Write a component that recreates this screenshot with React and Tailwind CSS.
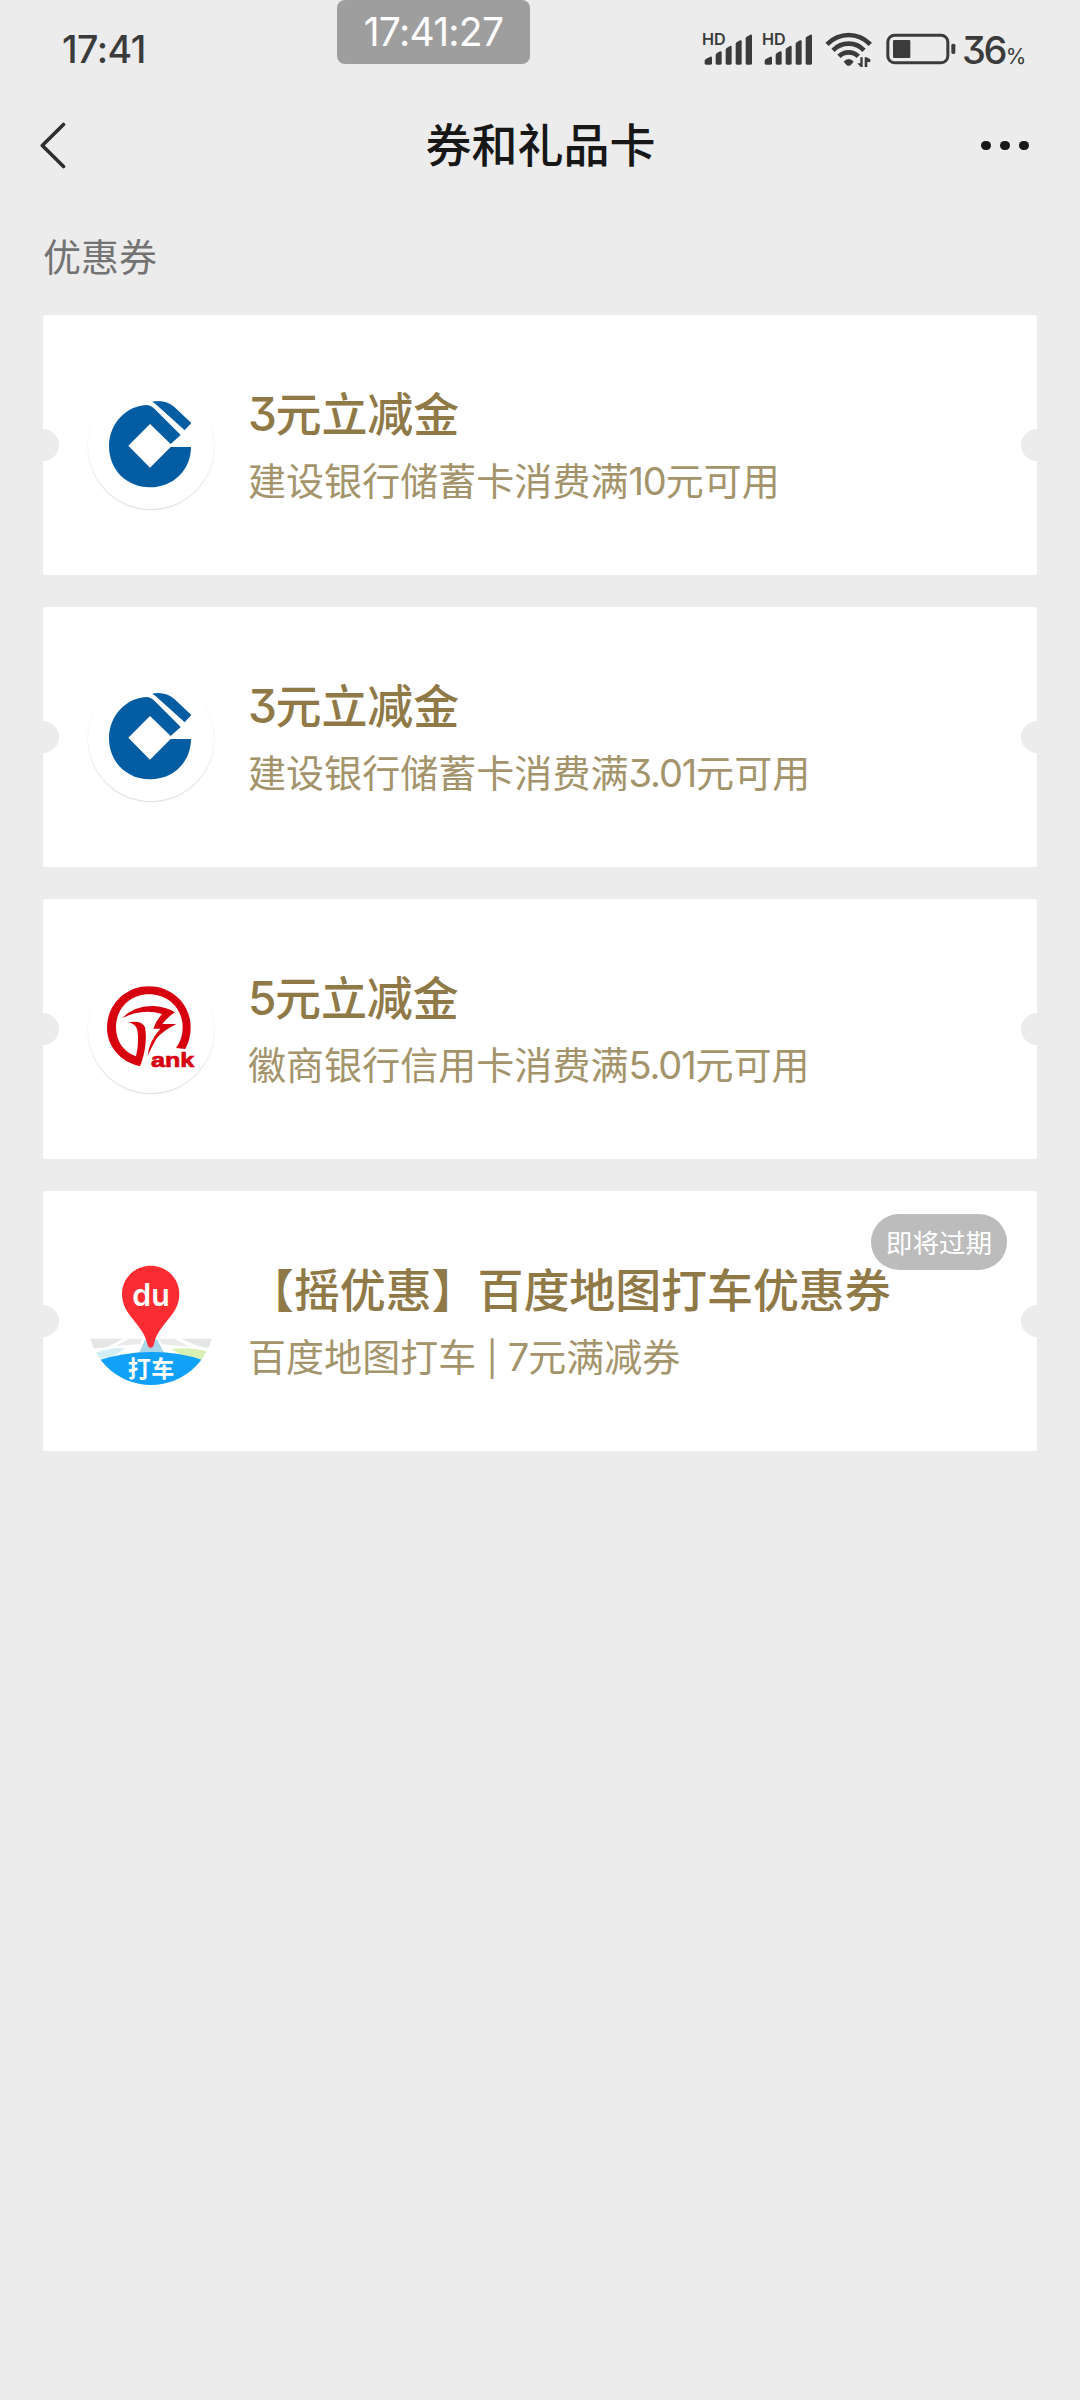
const CJK = "font-['Noto_Sans_CJK_SC',sans-serif]";
const NUM = "font-['Inter',sans-serif]";

function Signal() {
  return (
    <svg className="overflow-visible" width="53" height="38" viewBox="62 90 159 114" fill="#3b3b3b">
      <text x="65" y="135" fontSize="46" fontWeight="600" fontFamily="Inter, sans-serif" textLength="71" lengthAdjust="spacingAndGlyphs">HD</text>
      <path d="M73 190V182Q74 178 78 176L90 170Q95 169 95 174V190Q95 194 91 194H77Q73 194 73 190Z" />
      <path d="M106 190V165Q106 162 109 160L119 154Q124 152 124 157V190Q124 194 120 194H110Q106 194 106 190Z" />
      <path d="M136 190V149Q136 146 139 144L149 138Q154 136 154 141V190Q154 194 150 194H140Q136 194 136 190Z" />
      <path d="M166 190V132Q166 129 169 127L179 121Q184 119 184 124V190Q184 194 180 194H170Q166 194 166 190Z" />
      <path d="M196 190V115Q196 112 199 110L210 104Q215 102 215 107V190Q215 194 211 194H200Q196 194 196 190Z" />
    </svg>
  );
}

function Wifi() {
  return (
    <svg width="48" height="36" viewBox="433 96 144 108" fill="none">
      <g stroke="#3b3b3b" strokeWidth="14">
        <path d="M439 133Q467 105 504 105T569 133" />
        <path d="M457 151Q477 131 504 131T550 151" />
        <path d="M475 169Q487 157 504 157T533 169" />
      </g>
      <path d="M489 185Q495 177 504 177T519 185L511 194Q504 201 497 194Z" fill="#3b3b3b" />
      <path d="M539 172H546V201H540L530 190H539ZM552 201V172H558L569 178V186H560V201Z" fill="#3b3b3b" />
    </svg>
  );
}

function Battery() {
  return (
    <svg width="70" height="36" viewBox="617 96 210 108" fill="none">
      <rect x="622.5" y="106" width="180" height="82" rx="20" stroke="#3b3b3b" strokeWidth="9" />
      <rect x="638" y="120" width="52" height="54" rx="3" fill="#3b3b3b" />
      <rect x="813" y="131" width="12" height="31" rx="5" fill="#3b3b3b" />
    </svg>
  );
}

function StatusBar() {
  return (
    <div className="flex h-[98px] items-start text-[#3b3b3b]">
      <div className={`${NUM} ml-[62px] mt-[27px] w-[275px] text-[37.5px] leading-[46px] font-medium tracking-[-0.5px]`}>17:41</div>
      <div className={`${NUM} flex h-16 w-[193px] items-center justify-center rounded-lg bg-[#9e9e9e] text-[39px] tracking-[-0.7px] text-white`}>17:41:27</div>
      <div className="ml-[171px] mt-[30px] flex items-end">
        <Signal />
        <div className="ml-[7px]"><Signal /></div>
        <div className="ml-[11px]"><Wifi /></div>
        <div className="ml-[13px]"><Battery /></div>
      </div>
      <div className={`${NUM} mt-[27px] ml-[6px] flex items-baseline text-[38px] leading-[46px] font-medium [font-feature-settings:'cv09']`}>
        <span className="tracking-[-2.5px]">36</span>
        <span className="ml-px text-[21px] font-normal">%</span>
      </div>
    </div>
  );
}

function NavBar() {
  return (
    <div className="flex h-[96px] items-center justify-between pr-[51px] pl-[38px]">
      <svg width="36" height="48" viewBox="0 0 36 48" fill="none" stroke="#2e2e2e" strokeWidth="3.6" strokeLinecap="round" strokeLinejoin="round">
        <path d="M25.5 2.5L4.3 23.5L25.5 44.5" />
      </svg>
      <h1 className={`${CJK} mt-[-8px] ml-[26px] text-[46px] font-medium text-[#171717]`}>券和礼品卡</h1>
      <div className="flex gap-[9.5px] pb-[1px]">
        <i className="size-[9.7px] rounded-full bg-[#171717]" />
        <i className="size-[9.7px] rounded-full bg-[#171717]" />
        <i className="size-[9.7px] rounded-full bg-[#171717]" />
      </div>
    </div>
  );
}

function CcbLogo() {
  return (
    <svg width="126" height="126" viewBox="84 69 378 378" fill="#045da2">
      <path d="M276 125Q316 117 344 142L394 189L374 211L290 135Q284 129 276 125Z" />
      <path d="M362 225L332 252L270 192L205 257L270 323L332 261H393C393 330 340 382 270 382C198 382 147 328 147 259C147 190 200 136 262 135Q272 136 281 144Z" />
    </svg>
  );
}

function HuishangLogo() {
  return (
    <svg width="126" height="126" viewBox="84 51 378 378" fill="#d7000f">
      <path d="M240 349C180 335 141 288 141 234C141 163 198 109 266 109C337 109 392 163 392 232Q392 268 376 297L348 294Q368 268 368 232C368 174 323 133 267 133C210 133 168 176 168 232C168 277 194 307 228 319Q238 280 232 240Q228 222 204 217Q246 209 255 232C262 268 254 315 240 349Z" />
      <path d="M186 205Q222 166 282 168Q318 170 345 187Q322 202 307 222H349Q306 244 289 266Q276 289 263 317Q266 275 301 236H280Q288 212 306 192Q246 174 186 205Z" />
      <text x="273" y="352" fontSize="59" fontWeight="900" fontFamily="Liberation Sans, Arial, sans-serif" textLength="130" lengthAdjust="spacingAndGlyphs" stroke="#d7000f" strokeWidth="2">ank</text>
    </svg>
  );
}

function BaiduLogo() {
  return (
    <svg width="126" height="126" viewBox="84 87 378 378">
      <path d="M88 326H190L142 351L97 356Z" fill="#e4e5e5" />
      <path d="M208 326H247L240 342L166 348Z" fill="#e9eaea" />
      <path d="M297 326H343L389 350L305 343Z" fill="#e9eaea" />
      <path d="M363 326H456L450 355L414 348Z" fill="#e4e5e5" />
      <path d="M104 369Q150 352 196 354L168 374L118 388Z" fill="#d3eef5" />
      <path d="M334 357Q390 350 440 364L427 391L370 378Z" fill="#d9f0b4" />
      <path d="M256 328H291L314 372H236Z" fill="#a9d5e9" />
      <path d="M119 390Q190 367 273 366T427 390C393 440 335 467 273 467S153 440 119 390Z" fill="#12a1f8" />
      <path d="M272 107C224 107 186 145 186 192C186 257 250 282 262 342Q264 353 272 353T282 342C294 282 358 257 358 192C358 145 320 107 272 107Z" fill="#fb2d32" />
      <text x="217" y="229" fontSize="93" fontWeight="600" fontFamily="Inter, sans-serif" fill="#fff" textLength="112" lengthAdjust="spacingAndGlyphs">du</text>
      <text x="203" y="442" fontSize="69" fontWeight="700" fontFamily="Noto Sans CJK SC, sans-serif" fill="#fff" textLength="140" lengthAdjust="spacing">打车</text>
    </svg>
  );
}

const coupons = [
  { logo: CcbLogo, title: "3元立减金", note: "建设银行储蓄卡消费满10元可用" },
  { logo: CcbLogo, title: "3元立减金", note: "建设银行储蓄卡消费满3.01元可用" },
  { logo: HuishangLogo, title: "5元立减金", note: "徽商银行信用卡消费满5.01元可用" },
  { logo: BaiduLogo, title: "【摇优惠】百度地图打车优惠券", note: "百度地图打车 | 7元满减券", badge: "即将过期", flat: true },
];

/* Sets the digits of a line in the numeral face and trims the height of a divider bar. */
function Mixed({ text }) {
  return text.split(/([0-9.]+|\|)/).map((part, i) => {
    if (part === "|") {
      return <span key={i} className={`${NUM} mx-[1.5px] text-[34px] leading-none`}>{part}</span>;
    }
    return i % 2 ? (
      <span key={i} className={`${NUM} leading-none tracking-[-0.03em] [font-feature-settings:'cv09']`}>{part}</span>
    ) : (
      part
    );
  });
}

function Coupon({ logo: Logo, title, note, badge, flat }) {
  return (
    <article className="relative flex h-[260px] overflow-hidden rounded-[3px] bg-white pl-[45px]">
      <i className="absolute top-[114px] -left-4 size-8 rounded-full bg-[#ececec]" />
      <i className="absolute top-[114px] -right-4 size-8 rounded-full bg-[#ececec]" />
      <div className={`mt-[68px] size-[126px] shrink-0 overflow-hidden rounded-full ${flat ? "" : "shadow-[0_1px_1.5px_rgba(0,0,0,0.15)]"}`}>
        <Logo />
      </div>
      <div className={`${CJK} ml-[34px] pt-[63px] whitespace-nowrap`}>
        <h2 className="h-[65px] text-[46px] leading-[66px] font-medium tracking-[-0.1px] text-[#8f7947]"><Mixed text={title} /></h2>
        <p className="h-[72px] text-[38px] leading-[72px] tracking-[0.05px] text-[#a4946b]"><Mixed text={note} /></p>
      </div>
      {badge && (
        <span className={`${CJK} absolute top-[23px] right-[30px] flex h-14 w-[136px] items-center justify-center rounded-full bg-[#bcbcbc] pb-px text-[26.6px] text-white`}>{badge}</span>
      )}
    </article>
  );
}

export default function App() {
  return (
    <main className="h-[2400px] w-[1080px] overflow-hidden bg-[#ececec]">
      <StatusBar />
      <NavBar />
      <h3 className={`${CJK} h-[121px] pt-[34px] pl-[43px] text-[38px] leading-[54px] text-[#737373]`}>优惠券</h3>
      <section className="flex flex-col gap-8 px-[43px]">
        {coupons.map((c, i) => (
          <Coupon key={i} {...c} />
        ))}
      </section>
    </main>
  );
}
